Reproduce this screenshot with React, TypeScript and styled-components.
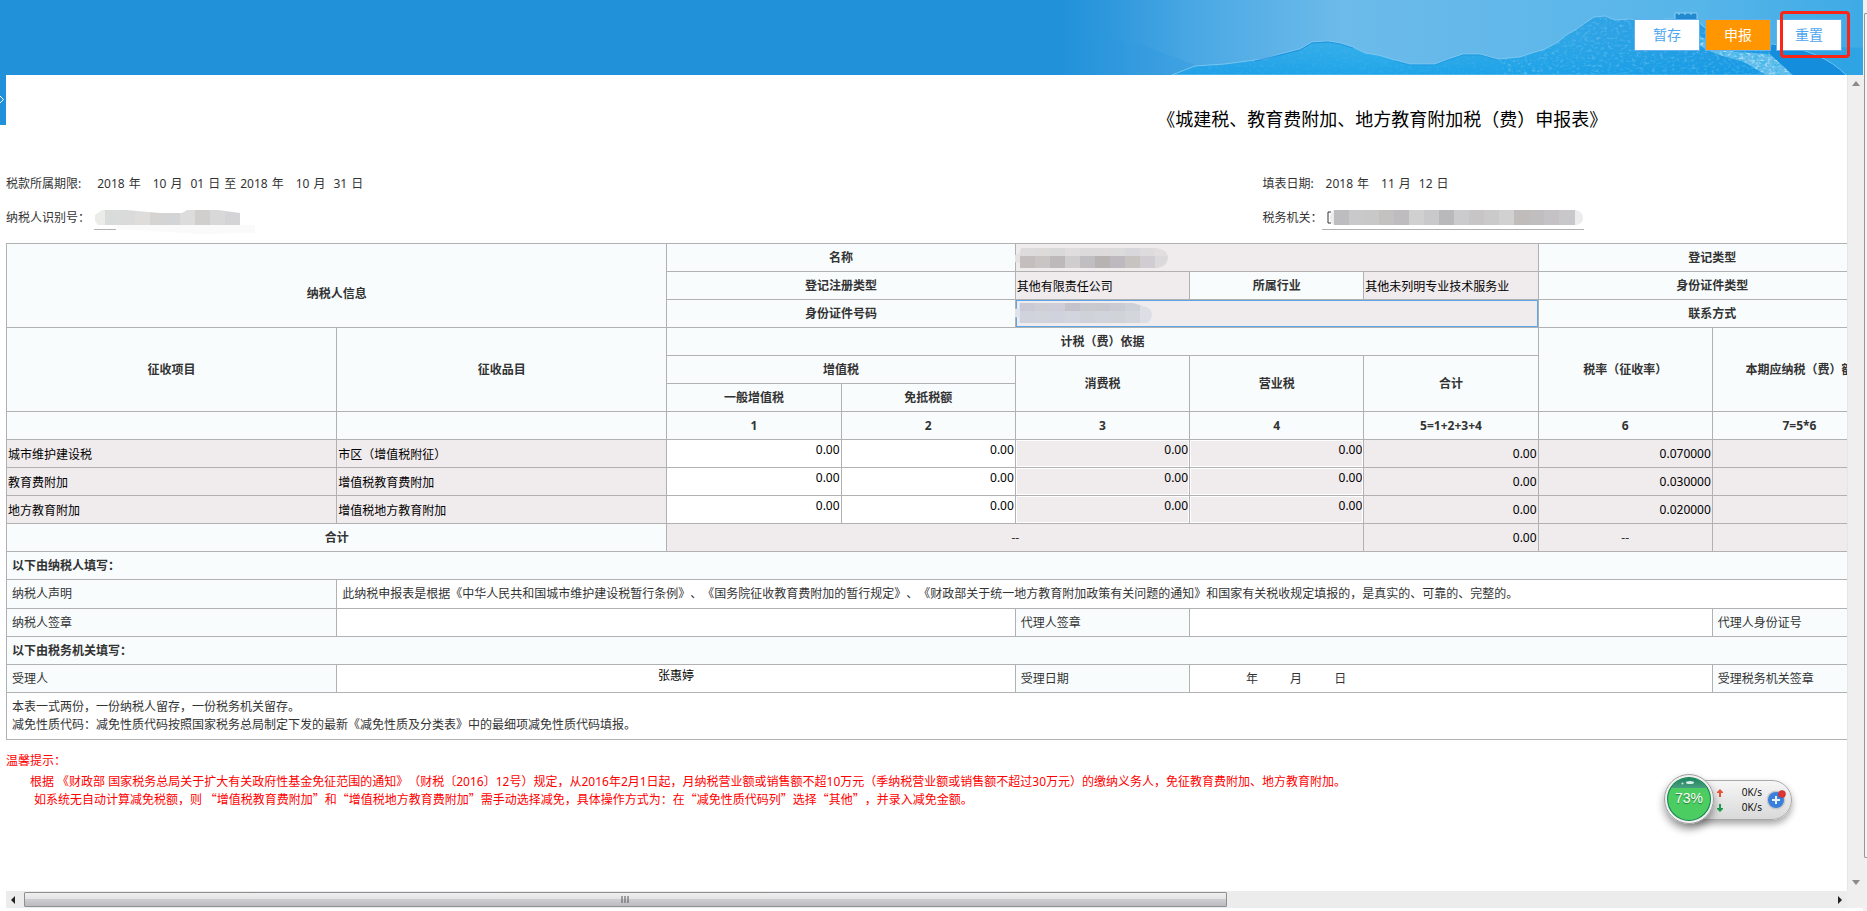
import React from 'react';
import styled, { createGlobalStyle, css } from 'styled-components';

const GlobalStyle = createGlobalStyle`
  * { box-sizing: border-box; }
  body {
    margin: 0;
    background: #fff;
    color: #333;
    font: 12px/18px "Noto Sans", "Noto Sans CJK SC", sans-serif;
    text-spacing-trim: space-all;
  }
  button, input { font-family: inherit; }
`;

const line = '#b1b1b1';
const blue = '#2191da';

const Page = styled.div`
  display: grid;
  grid-template-columns: minmax(0, 1fr) 4px;
  height: 100vh;
  overflow: hidden;
`;

const Main = styled.div`
  display: flex;
  flex-direction: column;
  min-height: 0;
  padding-bottom: 3px;
  position: relative;
`;

const Header = styled.header`
  position: relative;
  flex: none;
  display: flex;
  justify-content: flex-end;
  align-items: flex-start;
  gap: 5px;
  height: 75px;
  padding: 19px 21px 0 0;
  background: ${blue};
  overflow: hidden;
`;

const HeaderArt = styled.svg`
  position: absolute;
  top: 0;
  right: 0;
`;

const ActionButton = styled.button<{ $primary?: boolean }>`
  position: relative;
  width: 66px;
  height: 32px;
  padding: 0;
  border: 1px solid #62b0ee;
  background: ${p => (p.$primary ? '#ff9600' : '#fff')};
  color: ${p => (p.$primary ? '#fff' : '#4da6ee')};
  font-size: 14px;
  line-height: 20px;
`;

const Marker = styled.span`
  position: absolute;
  top: 11px;
  right: 13px;
  width: 70px;
  height: 47px;
  border: 3px solid #fb2416;
  border-radius: 4px;
  pointer-events: none;
`;

const Body = styled.div`
  flex: 1;
  display: flex;
  min-height: 0;
`;

const SideTab = styled.button`
  flex: none;
  width: 6px;
  height: 50px;
  padding: 0;
  border: 0;
  background: ${blue};
  overflow: hidden;
  svg { display: block; }
`;

const ScrollFrame = styled.div`
  flex: 1;
  min-width: 0;
  display: grid;
  grid-template-columns: minmax(0, 1fr) 16px;
  grid-template-rows: minmax(0, 1fr) 17px;
`;

const Viewport = styled.main`
  overflow: hidden;
  padding: 27px 6px 0 0;
`;

const Sheet = styled.div`
  width: 150%;
`;

const Title = styled.h1`
  margin: 0 0 31px;
  color: #000;
  font-size: 18px;
  font-weight: 400;
  line-height: 34px;
  text-align: center;
`;

const Meta = styled.div`
  display: grid;
  grid-template-columns: 1258fr 1498fr;
  grid-auto-rows: 34px;
  align-items: center;
  margin-bottom: 8px;
`;

const MetaItem = styled.div<{ $gap: number }>`
  display: flex;
  align-items: center;
  height: 34px;
  gap: ${p => p.$gap}px;
`;

const DateText = styled.span`
  display: flex;
  gap: 4px;
`;

const DatePart = styled.span<{ $before?: number }>`
  display: flex;
  gap: 4px;
  margin-left: ${p => p.$before ?? 0}px;
`;

const Underlined = styled.span<{ $width: number }>`
  display: block;
  width: ${p => p.$width}px;
  height: 24px;
  border-bottom: 1px solid ${line};
  svg { display: block; overflow: visible; }
`;

const Form = styled.table`
  width: 100%;
  table-layout: fixed;
  border-collapse: collapse;
  th, td {
    height: 28px;
    padding: 0;
    border: 1px solid ${line};
  }
`;

const Col = styled.col<{ $wide?: boolean }>`
  width: ${p => (p.$wide ? '12%' : 'auto')};
`;

const Head = styled.th<{ $start?: boolean; $low?: boolean }>`
  background: #f8fcfd;
  font-weight: 700;
  white-space: nowrap;
  ${p => p.$start && css`
    && { padding-left: 5px; }
    text-align: left;
  `}
  ${p => p.$low && css`
    && { padding-top: 16px; }
  `}
`;

const Label = styled.td`
  && { padding-left: 5px; }
  background: #f8fcfd;
`;

const Cell = styled.td<{ $shaded?: boolean; $align?: 'center' }>`
  background: ${p => (p.$shaded ? '#f0ebed' : '#fff')};
  text-align: ${p => p.$align ?? 'left'};
  position: relative;
`;

const Statement = styled.td`
  && { height: 29px; padding-left: 5px; }
  white-space: nowrap;
`;

const Remark = styled.td`
  && { height: 47px; padding-left: 5px; }
`;

const SignDate = styled.div`
  display: flex;
  gap: 32px;
  padding-left: 56px;
`;

const Field = styled.input<{ $align?: 'right' | 'center'; $top?: boolean; $tone?: 'shaded' | 'boxed' | 'focus' }>`
  display: block;
  width: 100%;
  height: 27px;
  margin: 0;
  padding: ${p => (p.$top ? '0 1px 8px' : '0 1px')};
  border: 0;
  border-radius: 0;
  outline: 0;
  background: ${p => (p.$tone ? '#f0ebed' : '#fff')};
  color: #000;
  font-size: 12px;
  line-height: 18px;
  text-align: ${p => p.$align ?? 'left'};
  ${p => p.$tone === 'boxed' && css`border: 1px solid #fff; padding: 0 0 8px;`}
  ${p => p.$tone === 'focus' && css`border: 1px solid #5ea6e8;`}
`;

const CellMask = styled.svg`
  position: absolute;
  left: -1px;
  top: 3px;
`;

const Tips = styled.section`
  margin-top: 12px;
  color: #f00;
  white-space: nowrap;
`;

const TipTitle = styled.p`
  margin: 0 0 3px;
`;

const TipLine = styled.p<{ $indent: number; $wideQuotes?: boolean }>`
  margin: 0;
  padding-left: ${p => p.$indent}px;
  line-height: 17px;
  ${p => p.$wideQuotes && css`font-family: "Noto Sans CJK SC", sans-serif;`}
`;

const VTrack = styled.div`
  display: flex;
  flex-direction: column;
  justify-content: space-between;
  align-items: center;
  padding: 6px 0;
  background: #efefef;
  border-left: 1px solid #e6e6e6;
`;

const HTrack = styled.div`
  display: flex;
  align-items: center;
  padding: 0 5px;
  background: #ececec;
`;

const HRail = styled.div`
  flex: 1;
  margin: 0 10px 0 8px;
`;

const HThumb = styled.div`
  display: flex;
  justify-content: center;
  align-items: center;
  width: 66.7%;
  height: 15px;
  border: 1px solid #8f8f93;
  border-radius: 1px;
  background: linear-gradient(#efeff0 0%, #e4e4e6 45%, #cdcdd1 50%, #bcbcc0 100%);
`;

const Corner = styled.div`
  background: #efefef;
`;

const OuterTrack = styled.div`
  background: #f0f0f0;
  padding: 13px 0 53px 1px;
`;

const OuterThumb = styled.div`
  height: 100%;
  border: 1px solid #979797;
  border-right: 0;
  border-radius: 2px 0 0 2px;
  background: #f4f4f4;
`;

const Widget = styled.aside`
  position: absolute;
  right: 71px;
  bottom: 91px;
  display: flex;
  align-items: center;
  justify-content: flex-end;
  width: 118px;
  height: 40px;
  padding-right: 5px;
  border: 1px solid #a9a9a9;
  border-radius: 20px;
  background: linear-gradient(#f6f6f6, #d9d9d9);
  box-shadow: 0 4px 7px rgba(0, 0, 0, 0.35);
`;

const Gauge = styled.div`
  position: absolute;
  left: -11px;
  top: -7px;
  width: 50px;
  height: 50px;
  border-radius: 25px;
  box-shadow: 0 5px 9px rgba(0, 0, 0, 0.4);
  svg { display: block; }
`;

const GaugeText = styled.span`
  position: absolute;
  inset: 0;
  color: #fff;
  font: 14px/48px "Liberation Sans", sans-serif;
  text-align: center;
  text-shadow: 0 1px 1px rgba(0, 60, 20, 0.6);
`;

const Speeds = styled.div`
  display: grid;
  grid-template-columns: 8px 37px;
  align-items: center;
  margin-right: 4px;
  color: #000;
  font: 10px/15px "Open Sans", sans-serif;
  text-align: right;
`;

const PlusButton = styled.button`
  width: 20px;
  height: 20px;
  padding: 0;
  border: 0;
  background: none;
  svg { display: block; overflow: visible; }
`;

const mountain =
  'M112 75 L122 71 L135 66 L165 64 L195 60 L205 59 L220 54 L240 49 L252 42 L268 41 L280 43 L293 47 L305 53 L318 55 L335 60 L350 64 L375 64 L388 59 L403 54 L420 54 L438 59 L460 57 L472 53 L485 49 L498 42 L506 35 L515 30 L525 23 L534 17 L545 16 L555 20 L570 19 L590 22 L605 19 L637 20 L645 28 L660 38 L690 42 L712 44 L745 56 L770 64 L786 75 Z';

function HeaderScene() {
  return (
    <HeaderArt width="803" height="75" viewBox="0 0 803 75" aria-hidden="true">
      <defs>
        <linearGradient id="sky">
          <stop offset="0" stopColor="#2191da" />
          <stop offset="0.07" stopColor="#3099dd" />
          <stop offset="0.17" stopColor="#4ba8e4" />
          <stop offset="0.35" stopColor="#6cbbea" />
          <stop offset="0.55" stopColor="#62b8ea" />
          <stop offset="0.8" stopColor="#56b5e9" />
          <stop offset="1" stopColor="#3eaae6" />
        </linearGradient>
        <linearGradient id="land" x1="0" y1="0" x2="1" y2="0">
          <stop offset="0" stopColor="#37a4e6" />
          <stop offset="0.3" stopColor="#38b1ea" />
          <stop offset="0.6" stopColor="#30a5e6" />
          <stop offset="1" stopColor="#1b8fdd" />
        </linearGradient>
        <linearGradient id="shade" x1="0" y1="0" x2="0" y2="1">
          <stop offset="0.3" stopColor="#14a4ea" stopOpacity="0" />
          <stop offset="1" stopColor="#0c9ce8" stopOpacity="0.55" />
        </linearGradient>
        <linearGradient id="veil" x1="0" y1="0" x2="1" y2="0">
          <stop offset="0" stopColor="#2191da" stopOpacity="0" />
          <stop offset="1" stopColor="#3b9fe1" stopOpacity="0.7" />
        </linearGradient>
        <filter id="rock" x="0" y="0" width="100%" height="100%">
          <feTurbulence type="fractalNoise" baseFrequency="0.25 0.4" numOctaves="3" seed="4" />
          <feColorMatrix values="0 0 0 0 0.6  0 0 0 0 0.84  0 0 0 0 0.98  2.6 0 0 0 -1.3" />
        </filter>
        <filter id="dark" x="0" y="0" width="100%" height="100%">
          <feTurbulence type="fractalNoise" baseFrequency="0.16 0.3" numOctaves="3" seed="9" />
          <feColorMatrix values="0 0 0 0 0.02  0 0 0 0 0.45  0 0 0 0 0.8  2.6 0 0 0 -1.3" />
        </filter>
        <clipPath id="land-clip"><path d={mountain} /></clipPath>
        <clipPath id="wall-clip"><path d="M638 34 L650 44 L676 52 L710 54 L733 75 L706 75 L684 62 L656 54 L640 46 Z" /></clipPath>
      </defs>
      <rect width="803" height="75" fill="url(#sky)" />
      <path d="M0 22 L40 36 L85 46 L135 65 L112 75 L0 75 Z" fill="url(#veil)" />
      <path d={mountain} fill="url(#land)" />
      <path d={mountain} fill="url(#shade)" />
      <g clipPath="url(#land-clip)">
        <rect x="110" width="340" height="75" filter="url(#rock)" opacity="0.1" />
        <rect x="440" width="360" height="75" filter="url(#rock)" opacity="0.3" />
        <rect x="440" width="360" height="75" filter="url(#dark)" opacity="0.25" />
      </g>
      <path d={mountain} fill="none" stroke="#8ccdf2" strokeWidth="1" opacity="0.75" />
      <path d="M195 61 L220 55 L240 50 L252 43 L268 42 L280 44 L293 48" fill="none" stroke="#1689da" opacity="0.7" />
      <path d="M335 61 L350 65 L375 65 L388 60 L403 55 L420 55 L438 60" fill="none" stroke="#1d94de" opacity="0.6" />
      <path d="M615 13 H637 V20 H615 Z" fill="#2189cf" stroke="#8ccdf2" />
      <path d="M618 14 h3 m3 0 h3 m3 0 h3" stroke="#a4dbf5" strokeDasharray="2 2" />
      <path d="M638 34 L650 44 L676 52 L710 54 L733 75 L706 75 L684 62 L656 54 L640 46 Z" fill="#62bdec" />
      <g clipPath="url(#wall-clip)">
        <rect x="630" y="30" width="110" height="45" filter="url(#dark)" />
        <rect x="630" y="30" width="110" height="45" filter="url(#rock)" />
      </g>
      <path d="M712 44 Q762 50 786 75 H733 L710 54 Z" fill="#148ddd" />
      <path d="M712 44 Q762 50 786 75 H803 V48 Z" fill="#2aa2e4" opacity="0.8" />
      <path d="M712 44 Q762 50 786 75" fill="none" stroke="#6cc2ef" />
    </HeaderArt>
  );
}

interface MosaicProps { widths: number; colors: string[]; lower?: string[] }

function MosaicBlocks({ widths, colors, lower }: MosaicProps) {
  return (
    <>
      {colors.map((c, i) => (
        <React.Fragment key={i}>
          <rect x={i * widths} y="0" width={widths + 1} height={lower ? 8 : 15} fill={c} />
          {lower && <rect x={i * widths} y="8" width={widths + 1} height="12" fill={lower[i]} />}
        </React.Fragment>
      ))}
    </>
  );
}

function IdMask() {
  return (
    <svg width="160" height="24" viewBox="0 0 160 24" aria-hidden="true">
      <clipPath id="id-shape"><path d="M8 4 H32 L66 7 H88 L93 4 H124 L146 7 V19 H4 L1 15 V9 Z" /></clipPath>
      <path d="M23 19 H161 V27 L106 28 L60 25 L23 23 Z" fill="#fafafa" />
      <g clipPath="url(#id-shape)"><g transform="translate(-4 4)">
        <MosaicBlocks widths={15} colors={['#ebebea', '#d9dcdb', '#dadada', '#dedddc', '#d5d4d3', '#d3d4d6', '#dcdcdd', '#d0cfce', '#d8d8d8', '#d4d4d6']} />
      </g></g>
    </svg>
  );
}

function OfficeMask() {
  return (
    <svg width="262" height="24" viewBox="0 0 262 24" aria-hidden="true">
      <path d="M9 6 H6 V17 H9" fill="none" stroke="#333" />
      <path d="M12 4 H254 Q261 6 261 12 Q261 18 254 19 H12 Q8 16 8 12 Q8 7 12 4 Z" fill="#ececec" />
      <g transform="translate(12 4)">
        <MosaicBlocks widths={15} colors={['#bdbcbe', '#c9c8ca', '#c9c8c9', '#c4c1c1', '#bfbcc0', '#d0d0d1', '#c9c8ca', '#b9b8ba', '#cbcacc', '#c8c5c6', '#cbcacb', '#d1d1d2', '#c0bcbb', '#c1bebf', '#c4c2c4', '#c8c8cb']} />
      </g>
    </svg>
  );
}

function NameMask() {
  return (
    <CellMask width="154" height="22" viewBox="0 0 154 22" aria-hidden="true">
      <clipPath id="name-shape"><path d="M6 1 H142 Q153 3 153 11 Q152 20 142 21 H5 V16 L0 15 V8 L5 6 Z" /></clipPath>
      <g clipPath="url(#name-shape)"><g transform="translate(-10 1)">
        <MosaicBlocks
          widths={15}
          colors={['#e4e2e3', '#dddbdb', '#dcdbda', '#dad9d9', '#dfdddd', '#dcdada', '#dcdada', '#dcdbdc', '#d8d7dc', '#dddbdc', '#e0dedf']}
          lower={['#e4e2e3', '#c4bebf', '#c8c5c4', '#bdb9bb', '#cfcdce', '#c0bec0', '#b7b3b3', '#bdb9be', '#c6c3c1', '#cfcdd1', '#dbd9da']}
        />
      </g></g>
    </CellMask>
  );
}

function NumberMask() {
  return (
    <CellMask width="138" height="22" viewBox="0 0 138 22" aria-hidden="true">
      <clipPath id="number-shape"><path d="M4 0 H118 L128 3 Q137 5 137 12 Q136 21 126 22 L112 20 H4 V15 L0 14 V6 L4 5 Z" /></clipPath>
      <g clipPath="url(#number-shape)"><g transform="translate(-10 0)">
        <MosaicBlocks
          widths={15}
          colors={['#dfe4ec', '#c8cad6', '#cdced6', '#cfced8', '#c4c2cb', '#c9c9d0', '#c7c9cf', '#c9ccd2', '#ced2d8', '#dce0e6']}
          lower={['#dfe4ec', '#d0d3dc', '#d1d4db', '#d0d3de', '#d2d5de', '#cfd2d9', '#d1d4da', '#d0d4d9', '#d3d7dc', '#dce0e6']}
        />
      </g></g>
    </CellMask>
  );
}

function FullDate({ y, m, d }: { y: string; m: string; d: string }) {
  return (
    <>
      <DatePart><span>{y}</span><span>年</span></DatePart>
      <DatePart $before={8}><span>{m}</span><span>月</span></DatePart>
      <DatePart $before={4}><span>{d}</span><span>日</span></DatePart>
    </>
  );
}

const rows = [
  { item: '城市维护建设税', kind: '市区（增值税附征）', rate: '0.070000' },
  { item: '教育费附加', kind: '增值税教育费附加', rate: '0.030000' },
  { item: '地方教育附加', kind: '增值税地方教育附加', rate: '0.020000' },
];

function TaxForm() {
  return (
    <Form>
      <colgroup>
        <Col $wide /><Col $wide />
        {Array.from({ length: 12 }, (_, i) => <Col key={i} />)}
      </colgroup>
      <tbody>
        <tr>
          <Head colSpan={2} rowSpan={3} $low>纳税人信息</Head>
          <Head colSpan={2}>名称</Head>
          <Cell colSpan={3} $shaded><Field aria-label="名称" $tone="shaded" readOnly /><NameMask /></Cell>
          <Head colSpan={2}>登记类型</Head>
          <Cell colSpan={5} $shaded />
        </tr>
        <tr>
          <Head colSpan={2}>登记注册类型</Head>
          <Cell $shaded><Field aria-label="登记注册类型" $tone="shaded" readOnly value="其他有限责任公司" /></Cell>
          <Head>所属行业</Head>
          <Cell $shaded><Field aria-label="所属行业" $tone="shaded" readOnly value="其他未列明专业技术服务业" /></Cell>
          <Head colSpan={2}>身份证件类型</Head>
          <Cell colSpan={5} $shaded />
        </tr>
        <tr>
          <Head colSpan={2}>身份证件号码</Head>
          <Cell colSpan={3} $shaded><Field aria-label="身份证件号码" $tone="focus" readOnly /><NumberMask /></Cell>
          <Head colSpan={2}>联系方式</Head>
          <Cell colSpan={5} $shaded />
        </tr>
        <tr>
          <Head rowSpan={3}>征收项目</Head>
          <Head rowSpan={3}>征收品目</Head>
          <Head colSpan={5}>计税（费）依据</Head>
          <Head rowSpan={3}>税率（征收率）</Head>
          <Head rowSpan={3}>本期应纳税（费）额</Head>
          <Head rowSpan={3} colSpan={5} />
        </tr>
        <tr>
          <Head colSpan={2}>增值税</Head>
          <Head rowSpan={2}>消费税</Head>
          <Head rowSpan={2}>营业税</Head>
          <Head rowSpan={2}>合计</Head>
        </tr>
        <tr>
          <Head>一般增值税</Head>
          <Head>免抵税额</Head>
        </tr>
        <tr>
          <Head /><Head />
          {['1', '2', '3', '4', '5=1+2+3+4', '6', '7=5*6'].map(t => <Head key={t}>{t}</Head>)}
          <Head colSpan={5} />
        </tr>
        {rows.map(r => (
          <tr key={r.item}>
            <Cell $shaded><Field aria-label="征收项目" $tone="shaded" readOnly value={r.item} /></Cell>
            <Cell $shaded><Field aria-label="征收品目" $tone="shaded" readOnly value={r.kind} /></Cell>
            <Cell><Field aria-label={`${r.item} 一般增值税`} $align="right" $top defaultValue="0.00" /></Cell>
            <Cell><Field aria-label={`${r.item} 免抵税额`} $align="right" $top defaultValue="0.00" /></Cell>
            <Cell><Field aria-label={`${r.item} 消费税`} $align="right" $tone="boxed" readOnly value="0.00" /></Cell>
            <Cell><Field aria-label={`${r.item} 营业税`} $align="right" $tone="boxed" readOnly value="0.00" /></Cell>
            <Cell $shaded><Field aria-label={`${r.item} 合计`} $align="right" $tone="shaded" readOnly value="0.00" /></Cell>
            <Cell $shaded><Field aria-label={`${r.item} 税率`} $align="right" $tone="shaded" readOnly value={r.rate} /></Cell>
            <Cell $shaded />
            <Cell colSpan={5} $shaded />
          </tr>
        ))}
        <tr>
          <Head colSpan={2}>合计</Head>
          <Cell colSpan={4} $shaded $align="center">--</Cell>
          <Cell $shaded><Field aria-label="合计" $align="right" $tone="shaded" readOnly value="0.00" /></Cell>
          <Cell $shaded $align="center">--</Cell>
          <Cell $shaded />
          <Cell colSpan={5} $shaded />
        </tr>
        <tr><Head colSpan={14} $start>以下由纳税人填写：</Head></tr>
        <tr>
          <Label>纳税人声明</Label>
          <Statement colSpan={13}>
            此纳税申报表是根据《中华人民共和国城市维护建设税暂行条例》、《国务院征收教育费附加的暂行规定》、《财政部关于统一地方教育附加政策有关问题的通知》和国家有关税收规定填报的，是真实的、可靠的、完整的。
          </Statement>
        </tr>
        <tr>
          <Label>纳税人签章</Label>
          <Cell colSpan={3} />
          <Label>代理人签章</Label>
          <Cell colSpan={3} />
          <Label>代理人身份证号</Label>
          <Cell colSpan={5} />
        </tr>
        <tr><Head colSpan={14} $start>以下由税务机关填写：</Head></tr>
        <tr>
          <Label>受理人</Label>
          <Cell colSpan={3}><Field aria-label="受理人" $align="center" $top defaultValue="张惠婷" /></Cell>
          <Label>受理日期</Label>
          <Cell colSpan={3}><SignDate><span>年</span><span>月</span><span>日</span></SignDate></Cell>
          <Label>受理税务机关签章</Label>
          <Cell colSpan={5} />
        </tr>
        <tr>
          <Remark colSpan={14}>
            本表一式两份，一份纳税人留存，一份税务机关留存。<br />
            减免性质代码：减免性质代码按照国家税务总局制定下发的最新《减免性质及分类表》中的最细项减免性质代码填报。
          </Remark>
        </tr>
      </tbody>
    </Form>
  );
}

function SpeedWidget() {
  return (
    <Widget>
      <Gauge>
        <svg width="50" height="50" viewBox="0 0 50 50" aria-hidden="true">
          <defs>
            <linearGradient id="cap" x1="0" y1="0" x2="0" y2="1">
              <stop offset="0" stopColor="#0a7a52" />
              <stop offset="1" stopColor="#4a9c80" />
            </linearGradient>
            <clipPath id="ball"><circle cx="25" cy="25" r="21" /></clipPath>
          </defs>
          <circle cx="25" cy="25" r="24.5" fill="#f1f1f1" stroke="#9c9c9c" />
          <circle cx="25" cy="25" r="22" fill="#0e7f50" />
          <g clipPath="url(#ball)">
            <rect width="50" height="50" fill="#4bcd61" />
            <rect width="50" height="14" fill="url(#cap)" />
          </g>
          <ellipse cx="26" cy="8.5" rx="4" ry="1.5" fill="#d5f2e6" />
          <circle cx="18.5" cy="9.5" r="1" fill="#d5f2e6" />
        </svg>
        <GaugeText>73%</GaugeText>
      </Gauge>
      <Speeds>
        <svg width="6" height="8" viewBox="0 0 6 8" aria-hidden="true"><path d="M3 0 L6 3 V4 H4 V8 H2 V4 H0 V3 Z" fill="#e8553a" /></svg>
        <span>0K/s</span>
        <svg width="6" height="8" viewBox="0 0 6 8" aria-hidden="true"><path d="M3 8 L6 5 V4 H4 V0 H2 V4 H0 V5 Z" fill="#1f9d4d" /></svg>
        <span>0K/s</span>
      </Speeds>
      <PlusButton aria-label="加速">
        <svg width="20" height="20" viewBox="0 0 20 20">
          <circle cx="10" cy="10" r="9.5" fill="#c9c9c9" />
          <circle cx="10" cy="10" r="8" fill="#3a7fdc" />
          <path d="M10 6 V14 M6 10 H14" stroke="#e9f2ff" strokeWidth="2" />
          <circle cx="16" cy="4" r="3.5" fill="#e03434" stroke="#b52a2a" strokeWidth="0.6" />
        </svg>
      </PlusButton>
    </Widget>
  );
}

export default function App() {
  return (
    <Page>
      <GlobalStyle />
      <Main>
        <Header>
          <HeaderScene />
          <ActionButton>暂存</ActionButton>
          <ActionButton $primary>申报</ActionButton>
          <ActionButton>重置</ActionButton>
          <Marker />
        </Header>
        <Body>
          <SideTab aria-label="展开">
            <svg width="6" height="50" viewBox="0 0 6 50"><path d="M0 21 L3.5 24.5 L0 28" fill="none" stroke="#fff" /></svg>
          </SideTab>
          <ScrollFrame>
            <Viewport>
              <Sheet>
                <Title>《城建税、教育费附加、地方教育附加税（费）申报表》</Title>
                <Meta>
                  <MetaItem $gap={16}>
                    <span>税款所属期限:</span>
                    <DateText>
                      <FullDate y="2018" m="10" d="01" />
                      <span>至</span>
                      <FullDate y="2018" m="10" d="31" />
                    </DateText>
                  </MetaItem>
                  <MetaItem $gap={12}>
                    <span>填表日期:</span>
                    <DateText><FullDate y="2018" m="11" d="12" /></DateText>
                  </MetaItem>
                  <MetaItem $gap={4}>
                    <span>纳税人识别号：</span>
                    <Underlined $width={22}><IdMask /></Underlined>
                  </MetaItem>
                  <MetaItem $gap={0}>
                    <span>税务机关：</span>
                    <Underlined $width={262}><OfficeMask /></Underlined>
                  </MetaItem>
                </Meta>
                <TaxForm />
                <Tips>
                  <TipTitle>温馨提示：</TipTitle>
                  <TipLine $indent={24}>
                    根据 《财政部 国家税务总局关于扩大有关政府性基金免征范围的通知》（财税〔2016〕12号）规定，从2016年2月1日起，月纳税营业额或销售额不超10万元（季纳税营业额或销售额不超过30万元）的缴纳义务人，免征教育费附加、地方教育附加。
                  </TipLine>
                  <TipLine $indent={28} $wideQuotes>
                    如系统无自动计算减免税额，则 “增值税教育费附加”和“增值税地方教育费附加”需手动选择减免，具体操作方式为：在“减免性质代码列”选择“其他”，并录入减免金额。
                  </TipLine>
                </Tips>
              </Sheet>
            </Viewport>
            <VTrack>
              <svg width="8" height="5" viewBox="0 0 8 5" aria-hidden="true"><path d="M4 0 L8 5 H0 Z" fill="#8a8a8a" /></svg>
              <svg width="8" height="5" viewBox="0 0 8 5" aria-hidden="true"><path d="M4 5 L8 0 H0 Z" fill="#8a8a8a" /></svg>
            </VTrack>
            <HTrack>
              <svg width="5" height="8" viewBox="0 0 5 8" aria-hidden="true"><path d="M0 4 L4 0 V8 Z" fill="#222" /></svg>
              <HRail>
                <HThumb>
                  <svg width="8" height="7" viewBox="0 0 8 7" aria-hidden="true"><path d="M1 0 V7 M4 0 V7 M7 0 V7" stroke="#555" /></svg>
                </HThumb>
              </HRail>
              <svg width="5" height="8" viewBox="0 0 5 8" aria-hidden="true"><path d="M5 4 L1 0 V8 Z" fill="#222" /></svg>
            </HTrack>
            <Corner />
          </ScrollFrame>
        </Body>
        <SpeedWidget />
      </Main>
      <OuterTrack><OuterThumb /></OuterTrack>
    </Page>
  );
}
